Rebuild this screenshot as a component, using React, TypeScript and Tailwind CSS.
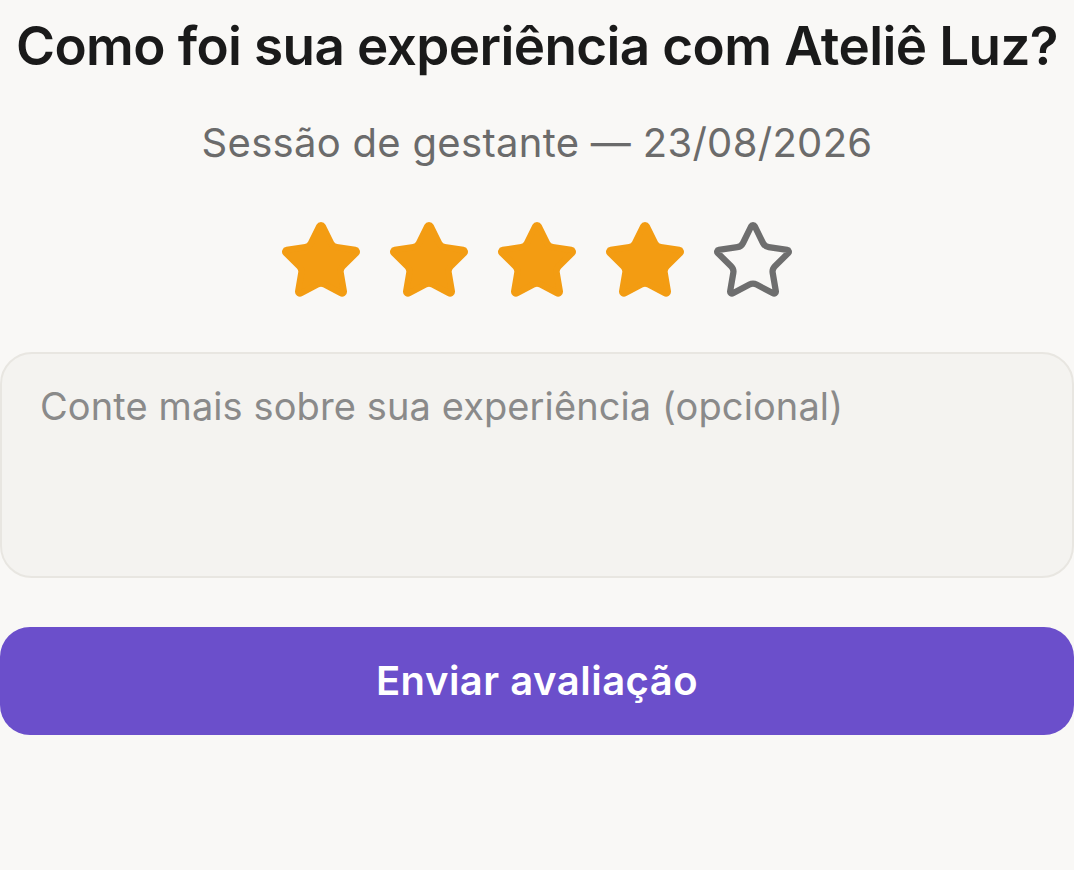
import { useState } from 'react'

const StarPath =
  'M11.525 2.295a.53.53 0 0 1 .95 0l2.31 4.679a2.123 2.123 0 0 0 1.595 1.16l5.166.756a.53.53 0 0 1 .294.904l-3.736 3.638a2.123 2.123 0 0 0-.611 1.878l.882 5.14a.53.53 0 0 1-.771.56l-4.618-2.428a2.122 2.122 0 0 0-1.973 0L6.396 21.01a.53.53 0 0 1-.77-.56l.881-5.139a2.122 2.122 0 0 0-.611-1.879L2.16 9.795a.53.53 0 0 1 .294-.906l5.165-.755a2.122 2.122 0 0 0 1.597-1.16z'

function Star({ filled }: { filled: boolean }) {
  return (
    <svg
      width={86}
      height={86}
      viewBox="0 0 24 24"
      fill={filled ? '#f39c12' : 'none'}
      stroke={filled ? '#f39c12' : '#6e6e6e'}
      strokeWidth={1.75}
      strokeLinecap="round"
      strokeLinejoin="round"
    >
      <path d={StarPath} />
    </svg>
  )
}

export default function App() {
  const [rating, setRating] = useState(4)
  const [comment, setComment] = useState('')

  return (
    <div
      className="min-h-screen bg-[#f9f8f6] pt-[14px]"
      style={{ fontFamily: 'Inter, "Noto Sans", sans-serif' }}
    >
      <h1 className="text-center text-[53px] leading-[64px] font-semibold text-[#1a1a1a] tracking-[-0.6px]">
        Como foi sua experiência com Ateliê Luz?
      </h1>
      <p className="mt-[40px] text-center text-[40px] leading-[49px] text-[#6b6b6b] tracking-[0.3px]">
        Sessão de gestante — 23/08/2026
      </p>

      {/* rating */}
      <div className="mt-[51px] flex justify-center gap-[22px]">
        {[1, 2, 3, 4, 5].map((n) => (
          <button key={n} onClick={() => setRating(n)} className="block">
            <Star filled={n <= rating} />
          </button>
        ))}
      </div>

      <textarea
        value={comment}
        onChange={(e) => setComment(e.target.value)}
        placeholder="Conte mais sobre sua experiência (opcional)"
        className="mt-[48px] block w-full h-[226px] resize-none rounded-[32px] border-2 border-[#e8e6e1] bg-[#f4f3f0] px-[38px] pt-[28px] text-[38px] leading-[48px] tracking-[0.1px] text-[#1a1a1a] placeholder:text-[#8a8a8a] outline-none"
      />

      <button className="mt-[49px] block w-full h-[108px] rounded-[30px] bg-[#6b4fcb] text-[40px] font-semibold tracking-[0.5px] text-white">
        Enviar avaliação
      </button>
    </div>
  )
}
